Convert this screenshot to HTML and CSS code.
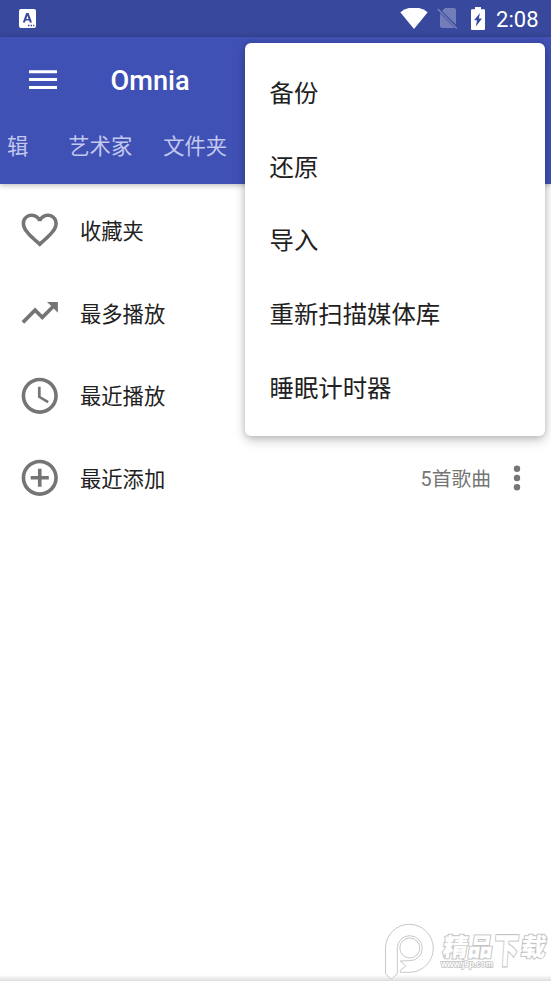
FILE: index.html
```html
<!DOCTYPE html>
<html lang="zh-CN">
<head>
<meta charset="utf-8">
<title>Omnia</title>
<link rel="stylesheet" href="styles.css">
</head>
<body>
<div class="screen">
  <div class="status">
    <svg class="ime" width="17" height="19" viewBox="0 0 17 19"><path fill="#fff" fill-rule="evenodd" d="M2 0h13q2 0 2 2v15q0 2-2 2H2q-2 0-2-2V2q0-2 2-2zM7.200 4L3.800 13.600H6l.6-2h3.500l.7 2H13L9.600 4zM8.400 6.600l1.100 3.300H7.300zM9 15.800v1.400h1.500v-1.400zm2.500 0v1.400H13v-1.400zm2.500 0v1.400h1.300v-1.400z"/></svg>
    <svg class="wifi" width="28" height="22" viewBox="0 0 28 22"><path fill="#fff" d="M14 21L.3 4.200Q6-.5 14-.5t13.700 4.700z"/></svg>
    <svg class="sim" width="21" height="23" viewBox="0 0 21 23"><path fill="#727db9" d="M8 1h9q2 0 2 2v14.700L5 4zM3 6.200L17.500 20.800 17 21H5q-2 0-2-2z"/><path stroke="#727db9" stroke-width="1.600" d="M.8 2l19 19.500"/></svg>
    <svg class="battery" width="14" height="23" viewBox="0 0 14 23"><path fill="#fff" fill-rule="evenodd" d="M4 0h6v2.200h3q1 0 1 1V22q0 1-1 1H1q-1 0-1-1V3.200q0-1 1-1h3zM9 6l-6 7.300h3L4.800 19.500 11 11.600H7.800z"/></svg>
    <span class="time">2:08</span>
  </div>
  <header class="appbar">
    <div class="toolbar">
      <svg width="28" height="20" viewBox="0 0 28 20"><path fill="#fff" d="M0 .3h28v3H0zM0 8h28v3H0zM0 15.900h28v3H0z"/></svg>
      <h1 class="title">Omnia</h1>
    </div>
    <nav class="tabs">
      <span class="tab tab-cut">辑</span><span class="tab">艺术家</span><span class="tab">文件夹</span>
    </nav>
  </header>
  <main class="list">
    <div class="row">
      <svg class="icon" viewBox="0 0 24 24"><path d="M16.500 3c-1.740 0-3.410.81-4.500 2.090C10.910 3.810 9.240 3 7.500 3 4.420 3 2 5.420 2 8.500c0 3.780 3.400 6.860 8.550 11.540L12 21.350l1.450-1.320C18.600 15.360 22 12.280 22 8.500 22 5.420 19.580 3 16.500 3zm-4.400 15.550l-.1.100-.1-.1C7.140 14.240 4 11.390 4 8.500 4 6.500 5.500 5 7.500 5c1.540 0 3.040.99 3.570 2.360h1.870C13.460 5.990 14.960 5 16.500 5c2 0 3.500 1.500 3.500 3.500 0 2.890-3.140 5.740-7.900 10.050z"/></svg>
      <span class="name">收藏夹</span>
    </div>
    <div class="row">
      <svg class="icon" viewBox="0 0 24 24"><path d="M16 6l2.290 2.290-4.880 4.880-4-4L2 16.590 3.410 18l6-6 4 4 6.300-6.290L22 12V6z"/></svg>
      <span class="name">最多播放</span>
    </div>
    <div class="row">
      <svg class="icon" viewBox="0 0 24 24"><path d="M11.990 2C6.470 2 2 6.480 2 12s4.470 10 9.990 10C17.520 22 22 17.520 22 12S17.520 2 11.990 2zM12 20c-4.420 0-8-3.580-8-8s3.580-8 8-8 8 3.580 8 8-3.580 8-8 8zm.5-13H11v6l5.250 3.150.75-1.230-4.500-2.670z"/></svg>
      <span class="name">最近播放</span>
    </div>
    <div class="row">
      <svg class="icon" viewBox="0 0 24 24"><path d="M13 7h-2v4H7v2h4v4h2v-4h4v-2h-4V7zm-1-5C6.480 2 2 6.480 2 12s4.480 10 10 10 10-4.480 10-10S17.520 2 12 2zm0 18c-4.410 0-8-3.590-8-8s3.590-8 8-8 8 3.590 8 8-3.590 8-8 8z"/></svg>
      <span class="name">最近添加</span>
      <span class="count">5首歌曲</span>
      <svg class="more" width="8" height="26" viewBox="0 0 8 26"><circle cx="4" cy="3.800" r="3.200"/><circle cx="4" cy="13" r="3.200"/><circle cx="4" cy="22.200" r="3.200"/></svg>
    </div>
  </main>
  <div class="menu">
    <div class="item">备份</div>
    <div class="item">还原</div>
    <div class="item">导入</div>
    <div class="item">重新扫描媒体库</div>
    <div class="item">睡眠计时器</div>
  </div>
  <div class="bottom-shade"></div>
  <svg class="watermark" width="171" height="59" viewBox="0 0 171 59">
    <g fill="none" stroke="#c8c8c8" stroke-width="1">
      <path fill="#fff" d="M17.300 52V26a12.500 12.500 0 1 1 12.500 12.700L20.300 39l5.400 5-5.400 4.500v1.800H30A23.900 24 0 1 0 5.500 26v26l5.700 5z"/>
      <circle cx="29.800" cy="26" r="10" fill="#fff"/>
    </g>
    <g class="wm-cn">
      <text transform="translate(62 34) skewX(-8)" textLength="50" lengthAdjust="spacingAndGlyphs" font-size="25">精品</text>
      <text transform="translate(113 41) skewX(-4) scale(.8 1.150)" font-size="31">下</text>
      <text transform="translate(140 34) skewX(-8)" font-size="25">载</text>
    </g>
    <text class="wm-url" x="61" y="45" textLength="52" lengthAdjust="spacingAndGlyphs">www.j9p.com</text>
  </svg>
</div>
</body>
</html>
```
FILE: styles.css
```css
* { box-sizing: border-box; }
body {
  margin: 0;
  background: #fff;
  font-family: Roboto, "Noto Sans CJK SC", sans-serif;
}
.screen {
  position: relative;
  height: 981px;
  overflow: hidden;
}
.status {
  display: flex;
  align-items: center;
  height: 37px;
  padding: 0 12.500px 0 19px;
  background: #38489d;
}
.wifi { margin-left: auto; }
.sim { margin-left: 9px; }
.battery { margin-left: 12.500px; }
.time {
  margin-left: 11.500px;
  color: #fff;
  font-size: 22px;
  line-height: 37px;
  padding-top: 1px;
}
.appbar {
  height: 147px;
  background: #4051b5;
  box-shadow: 0 1px 6px rgba(0, 0, 0, .3);
}
.toolbar {
  display: flex;
  align-items: center;
  gap: 53px;
  height: 86px;
  padding-left: 29px;
}
.title {
  margin: 2px 0 0 .5px;
  color: #fff;
  font-size: 27.200px;
  font-weight: 500;
}
.tabs {
  display: flex;
  align-items: center;
  height: 43px;
  margin-left: 8px;
  overflow: hidden;
}
.tab {
  flex: none;
  margin-right: 31px;
  color: #c2c8ee;
  font-size: 21.300px;
}
.tab-cut { margin: 0 40px 0 -1px; }
.list { padding-top: 6px; }
.row {
  display: flex;
  align-items: center;
  height: 82.700px;
  padding: 0 30px 0 18px;
}
.icon {
  width: 43.500px;
  height: 43.500px;
  margin-top: -2.500px;
  fill: #757575;
}
.name {
  margin: -4px 0 0 18.500px;
  color: #212121;
  font-size: 21.300px;
}
.count {
  margin: -3px 0 0 auto;
  color: #757575;
  font-size: 19.800px;
}
.more { margin: -2px 0 0 22px; fill: #757575; }
.menu {
  position: absolute;
  top: 43px;
  left: 245px;
  width: 300px;
  height: 393px;
  padding: 12px 24.500px;
  border-radius: 6px;
  background: #fff;
  box-shadow: 0 4px 12px rgba(0, 0, 0, .22), 0 1px 6px rgba(0, 0, 0, .14);
}
.item {
  display: flex;
  align-items: center;
  height: 73.600px;
  color: #212121;
  font-size: 24.400px;
}
.bottom-shade {
  position: absolute;
  right: 0;
  bottom: 0;
  left: 0;
  height: 6px;
  background: linear-gradient(#fff, #dedede);
}
.watermark { position: absolute; left: 380px; top: 922px; }
.wm-cn {
  font-family: "Noto Sans CJK SC", sans-serif;
  font-weight: 900;
  fill: #fff;
  stroke: #c4c4c4;
  stroke-width: 2px;
  paint-order: stroke;
}
.wm-url {
  font-family: "Liberation Sans", sans-serif;
  font-size: 9px;
  font-weight: 700;
  fill: #fff;
  stroke: #c0c0c0;
  stroke-width: 1.500px;
  paint-order: stroke;
}
```
